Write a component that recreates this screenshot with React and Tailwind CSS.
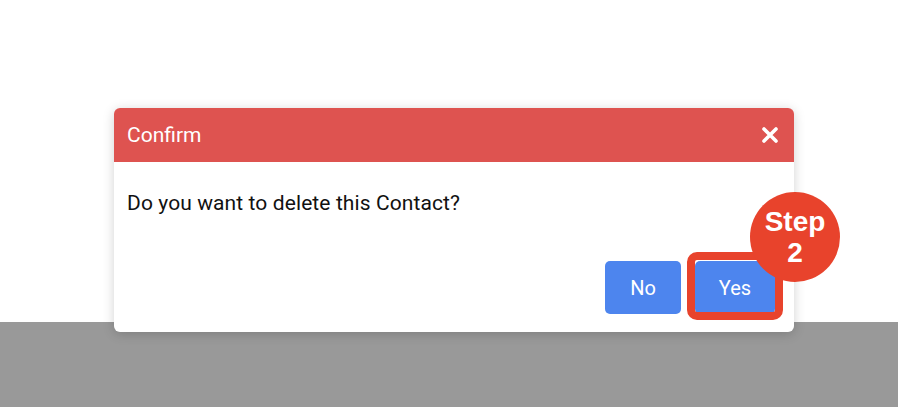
export default function App() {
  return (
    <div className="relative w-[898px] h-[407px] overflow-hidden bg-white" style={{ fontFamily: "Roboto, 'Liberation Sans', sans-serif" }}>
      <div className="h-[322px] bg-white" />
      <div className="h-[85px] bg-[#999999]" />

      <div className="absolute left-[114px] top-[108px] w-[680px] h-[224px] rounded-[6px] bg-white shadow-[0_2px_12px_rgba(0,0,0,0.18)] flex flex-col">
        <div className="h-[54px] rounded-t-[6px] bg-[#DE5350] flex items-center justify-between pl-[13px] pr-[15px]">
          <span className="text-white text-[21px] leading-none">Confirm</span>
          <svg width="18" height="18" viewBox="0 0 18 18">
            <path d="M3 3 L15 15 M15 3 L3 15" stroke="white" strokeWidth="3.6" strokeLinecap="round" />
          </svg>
        </div>
        <div className="flex-1 flex flex-col pl-[13px] pr-[19px] pt-[29px] pb-[18px]">
          <p className="text-[21px] leading-[24px] tracking-[0.1px] text-[#111]">Do you want to delete this Contact?</p>
          <div className="mt-auto flex justify-end gap-[14px]">
            <button className="w-[76px] h-[53px] rounded-[5px] bg-[#4D85EE] text-white text-[20px]">No</button>
            <div className="relative">
              <button className="w-[80px] h-[53px] rounded-[5px] bg-[#4D85EE] text-white text-[20px]">Yes</button>
              <div className="absolute left-[-8px] top-[-9px] w-[96px] h-[68px] rounded-[10px] border-[8px] border-[#E8432C] pointer-events-none" />
            </div>
          </div>
        </div>
      </div>

      <div className="absolute left-[750px] top-[192px] w-[90px] h-[90px] rounded-full bg-[#E8432C] flex flex-col items-center justify-center text-white font-bold text-[28px] leading-[31px]" style={{ fontFamily: "'Liberation Sans', Arial, sans-serif" }}>
        <span>Step</span>
        <span>2</span>
      </div>
    </div>
  );
}
